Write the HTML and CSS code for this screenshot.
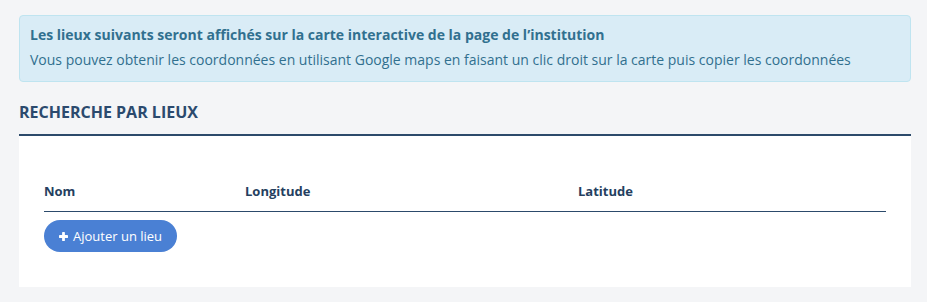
FILE: index.html
```html
<!DOCTYPE html>
<html lang="fr">
<head>
<meta charset="utf-8">
<title>Lieux</title>
<link rel="stylesheet" href="styles.css">
</head>
<body>
<main class="page">
  <div class="alert">
    <p class="alert-title">Les lieux suivants seront affichés sur la carte interactive de la page de l’institution</p>
    <p class="alert-text">Vous pouvez obtenir les coordonnées en utilisant Google maps en faisant un clic droit sur la carte puis copier les coordonnées</p>
  </div>
  <h2 class="section-title">RECHERCHE PAR LIEUX</h2>
  <section class="panel">
    <div class="table-head">
      <span class="th">Nom</span>
      <span class="th">Longitude</span>
      <span class="th">Latitude</span>
    </div>
    <button class="btn-add" type="button">
      <svg class="icon-plus" width="9" height="9" viewBox="0 0 9 9" aria-hidden="true">
        <rect x="3.1" y="0" width="2.8" height="9" rx="0.4" fill="#fff"/>
        <rect x="0" y="3.1" width="9" height="2.8" rx="0.4" fill="#fff"/>
      </svg>
      <span>Ajouter un lieu</span>
    </button>
  </section>
</main>
</body>
</html>
```
FILE: styles.css
```css
* { box-sizing: border-box; }
html, body { margin: 0; padding: 0; }
body {
  background: #f4f5f7;
  font-family: "Open Sans", "Noto Sans", sans-serif;
  width: 927px;
  height: 302px;
  overflow: hidden;
}
.page {
  padding: 15px 16px 0 19px;
}
.alert {
  background: #d9ecf6;
  border: 1px solid #bfe4f0;
  border-radius: 4px;
  padding: 9px 10px 11px;
  color: #31708f;
}
.alert p { margin: 0; font-size: 14px; line-height: 20px; }
.alert-title { font-weight: 700; margin-bottom: 5px !important; }
.section-title {
  margin: 19px 0 0;
  font-size: 16px;
  line-height: 22px;
  font-weight: 700;
  color: #2b4a6e;
  padding-bottom: 11px;
  border-bottom: 2px solid #2c4a6b;
}
.panel {
  background: #fff;
  padding: 46px 25px 35px;
}
.table-head {
  display: grid;
  grid-template-columns: 201px 333px 1fr;
  padding-bottom: 11px;
  border-bottom: 1px solid #2c4a6b;
}
.th {
  font-size: 13px;
  line-height: 18px;
  font-weight: 700;
  color: #253f5f;
}
.btn-add {
  margin-top: 8px;
  display: inline-flex;
  align-items: center;
  gap: 5px;
  height: 32px;
  padding: 0 15px;
  border: 0;
  border-radius: 16px;
  background: #4a80d4;
  color: #fff;
  font-family: inherit;
  font-size: 13px;
  line-height: 18px;
}
.icon-plus { display: block; flex: none; }
```
